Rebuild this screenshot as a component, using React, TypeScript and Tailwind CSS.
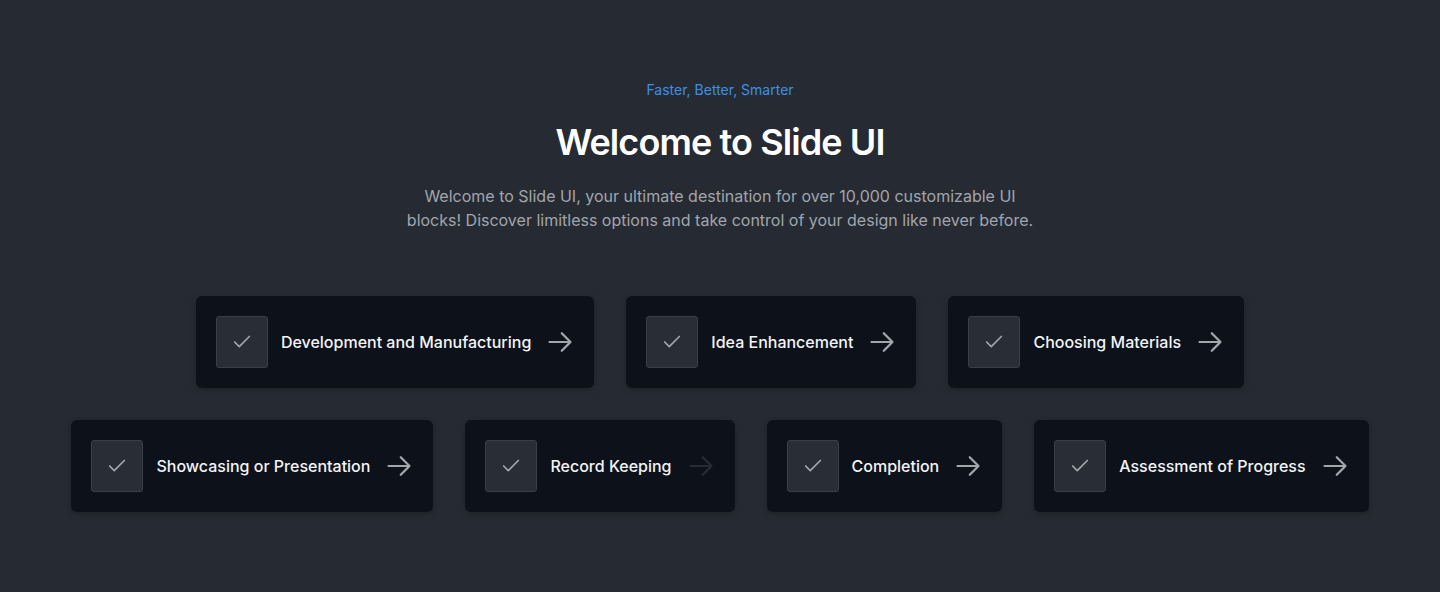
import { Check } from "lucide-react";

type Item = {
  label: string;
  dim?: boolean;
};

const rows: Item[][] = [
  [{ label: "Development and Manufacturing" }, { label: "Idea Enhancement" }, { label: "Choosing Materials" }],
  [
    { label: "Showcasing or Presentation" },
    { label: "Record Keeping", dim: true },
    { label: "Completion" },
    { label: "Assessment of Progress" },
  ],
];

function Arrow({ dim }: { dim?: boolean }) {
  return (
    <svg
      width="28"
      height="28"
      viewBox="0 0 24 24"
      fill="none"
      stroke="currentColor"
      strokeWidth={1.9}
      strokeLinecap="round"
      strokeLinejoin="round"
      className={dim ? "ml-[2px] text-[#262b34]" : "ml-[2px] text-[#a3a6ad]"}
    >
      <path d="M13.5 4.5 21 12m0 0-7.5 7.5M21 12H3" />
    </svg>
  );
}

export default function App() {
  return (
    <div
      className="min-h-[592px] w-full bg-[#262b33] pt-20 pb-20"
      style={{ fontFamily: "Inter, 'Noto Sans', sans-serif" }}
    >
      <div className="flex flex-col items-center text-center">
        <p className="text-sm leading-5 text-[#3e8ee6]">Faster, Better, Smarter</p>
        <h1 className="mt-[22px] text-4xl leading-10 font-semibold tracking-[-0.025em] text-white">
          Welcome to Slide UI
        </h1>
        <p className="mt-[22px] max-w-[640px] text-base leading-6 text-[#a1a5ad]">
          Welcome to Slide UI, your ultimate destination for over 10,000 customizable UI blocks! Discover limitless
          options and take control of your design like never before.
        </p>
      </div>
      <section className="mt-16 flex flex-col items-center gap-8">
        {rows.map((row, i) => (
          <div key={i} className="flex justify-center gap-8">
            {row.map((item) => {
              return (
                <div
                  key={item.label}
                  className="flex items-center gap-[13px] rounded-md bg-[#0c111a] py-5 pr-5 pl-5 shadow-[0_2px_6px_rgba(0,0,0,0.25)]"
                >
                  <div className="flex h-[52px] w-[52px] items-center justify-center rounded-[3px] border border-[#3a3f47] bg-[#292e36]">
                    <Check size={22} strokeWidth={1.8} className="text-[#a3a6ad]" />
                  </div>
                  <span className="text-base font-medium whitespace-nowrap text-[#f3f4f6]">{item.label}</span>
                  <Arrow dim={item.dim} />
                </div>
              );
            })}
          </div>
        ))}
      </section>
    </div>
  );
}
